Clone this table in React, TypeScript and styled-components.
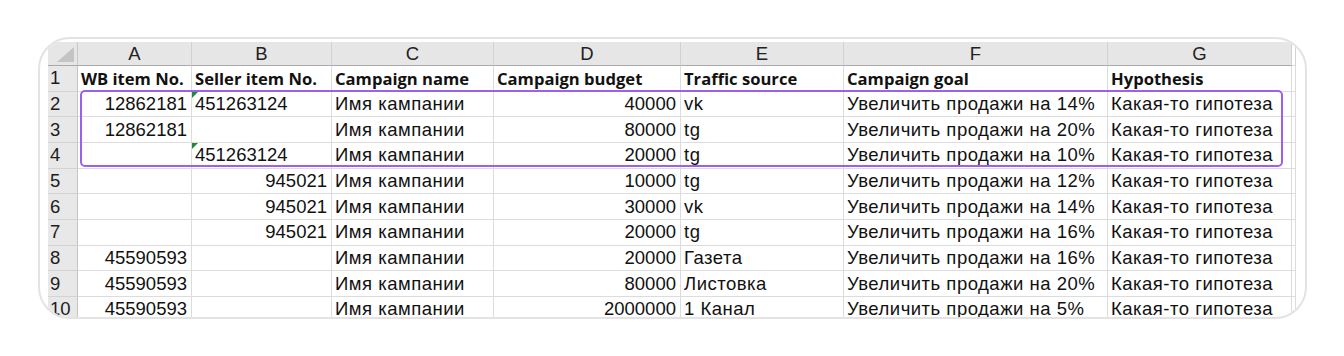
import React from "react";
import styled, { createGlobalStyle } from "styled-components";

const GlobalStyle = createGlobalStyle`
  html, body {
    margin: 0;
    padding: 0;
    background: #ffffff;
  }
  body {
    font-family: "Liberation Sans", Arial, sans-serif;
  }
`;

const COLS = [30, 114, 140, 162, 187, 163, 264, 184, 4];
const LETTERS = ["A", "B", "C", "D", "E", "F", "G"];

type Align = "left" | "right";

interface CellData {
  text: string;
  align?: Align;
  flag?: boolean;
  words?: boolean;
}

const headers = [
  "WB item No.",
  "Seller item No.",
  "Campaign name",
  "Campaign budget",
  "Traffic source",
  "Campaign goal",
  "Hypothesis",
];

const raw: [string, string, boolean, string, string, string][] = [
  ["12862181", "451263124", true, "40000", "vk", "14%"],
  ["12862181", "", false, "80000", "tg", "20%"],
  ["", "451263124", true, "20000", "tg", "10%"],
  ["", "945021", false, "10000", "tg", "12%"],
  ["", "945021", false, "30000", "vk", "14%"],
  ["", "945021", false, "20000", "tg", "16%"],
  ["45590593", "", false, "20000", "Газета", "16%"],
  ["45590593", "", false, "80000", "Листовка", "20%"],
  ["45590593", "", false, "2000000", "1 Канал", "5%"],
];

const rows: CellData[][] = raw.map(([wb, seller, asText, budget, source, pct]) => [
  { text: wb, align: "right" },
  { text: seller, align: asText ? "left" : "right", flag: asText },
  { text: "Имя кампании", words: true },
  { text: budget, align: "right" },
  { text: source, words: true },
  { text: `Увеличить продажи на ${pct}`, words: true },
  { text: "Какая-то гипотеза", words: true },
]);

const Frame = styled.div`
  box-sizing: border-box;
  margin: 37px 0 0 38px;
  width: 1269px;
  height: 282px;
  border: 2px solid #e3e3e3;
  border-radius: 32px;
  overflow: hidden;
  padding: 3px 0 0 8px;
  background: #fff;
`;

const Sheet = styled.div`
  position: relative;
  display: grid;
  grid-template-columns: ${COLS.map((w) => `${w}px`).join(" ")};
  grid-template-rows: 24px repeat(10, 25.67px);
`;

const Corner = styled.div`
  position: relative;
  box-sizing: border-box;
  background: #e6e6e6;
  border-right: 1px solid #c9c9c9;
  border-bottom: 1px solid #a9a9a9;

  &::after {
    content: "";
    position: absolute;
    right: 3px;
    bottom: 3px;
    width: 0;
    height: 0;
    border-left: 17px solid transparent;
    border-bottom: 15px solid #c4c4c4;
  }
`;

const ColHead = styled.div<{ $blank?: boolean }>`
  box-sizing: border-box;
  display: flex;
  align-items: center;
  justify-content: center;
  background: ${(p) => (p.$blank ? "#ffffff" : "#e6e6e6")};
  border-right: 1px solid #d2d2d2;
  border-bottom: 1px solid ${(p) => (p.$blank ? "#dcdcdc" : "#a9a9a9")};
  font-size: 18.5px;
  color: #222;
  padding-top: 1px;
`;

const RowHead = styled.div`
  box-sizing: border-box;
  display: flex;
  align-items: center;
  padding-left: 2px;
  background: #e8e8e8;
  border-right: 1px solid #c4c4c4;
  border-bottom: 1px solid #d4d4d4;
  font-size: 18.5px;
  color: #1c1c1c;
  white-space: nowrap;
`;

const Cell = styled.div<{ $align?: Align; $bold?: boolean; $flag?: boolean; $words?: boolean }>`
  position: relative;
  box-sizing: border-box;
  display: flex;
  align-items: center;
  justify-content: ${(p) => (p.$align === "right" ? "flex-end" : "flex-start")};
  padding: ${(p) => (p.$align === "right" ? "0 4px 0 0" : "0 0 0 3px")};
  border-right: 1px solid #dcdcdc;
  border-bottom: 1px solid #dcdcdc;
  white-space: nowrap;
  overflow: hidden;
  color: #111;
  font-family: ${(p) =>
    p.$bold ? '"Open Sans", "Noto Sans", sans-serif' : '"Liberation Sans", Arial, sans-serif'};
  font-weight: ${(p) => (p.$bold ? 700 : 400)};
  font-size: ${(p) => (p.$bold ? "16.6px" : "18.5px")};
  letter-spacing: ${(p) => (p.$words ? "0.5px" : "0")};

  &::before {
    content: "";
    display: ${(p) => (p.$flag ? "block" : "none")};
    position: absolute;
    top: 0;
    left: 0;
    border-top: 6px solid #1f8a3c;
    border-right: 6px solid transparent;
  }
`;

const Selection = styled.div`
  position: absolute;
  left: 32px;
  top: 48px;
  width: 1203px;
  height: 77px;
  box-sizing: border-box;
  border: 2px solid #9d5ff0;
  border-radius: 5px;
  pointer-events: none;
`;

export default function App() {
  return (
    <>
      <GlobalStyle />
      <Frame>
        <Sheet>
          <Corner />
          {LETTERS.map((l) => (
            <ColHead key={l}>{l}</ColHead>
          ))}
          <ColHead $blank />

          <RowHead>1</RowHead>
          {headers.map((h) => (
            <Cell key={h} $bold>
              {h}
            </Cell>
          ))}
          <Cell />

          {rows.map((r, i) => (
            <React.Fragment key={i}>
              <RowHead>{i + 2}</RowHead>
              {r.map((c, j) => (
                <Cell key={j} $align={c.align} $flag={c.flag} $words={c.words}>
                  {c.text}
                </Cell>
              ))}
              <Cell />
            </React.Fragment>
          ))}
          <Selection />
        </Sheet>
      </Frame>
    </>
  );
}
